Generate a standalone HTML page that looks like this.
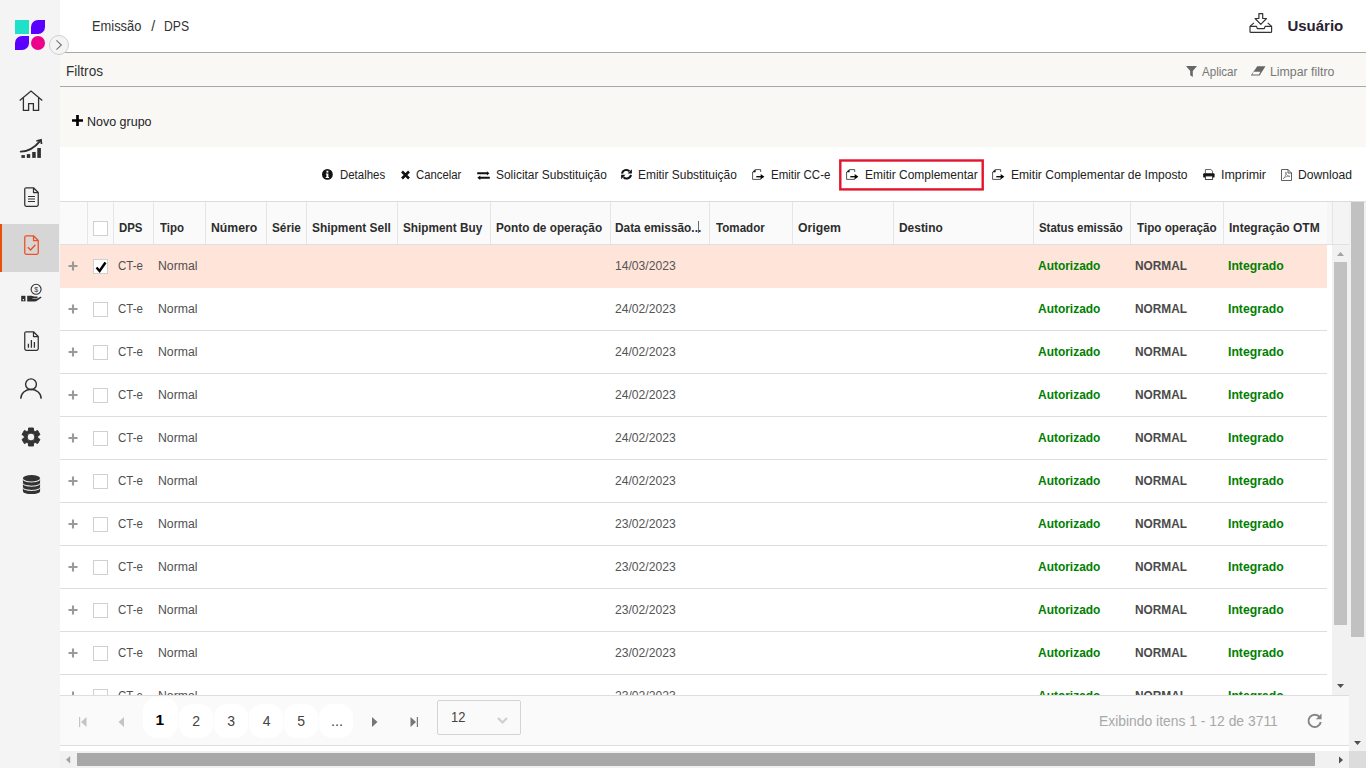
<!DOCTYPE html>
<html lang="pt-BR"><head><meta charset="utf-8"><title>Emissão / DPS</title>
<style>
*{box-sizing:border-box;margin:0;padding:0}
html,body{width:1366px;height:768px;overflow:hidden;background:#fff}
body{position:relative;font-family:"Liberation Sans",sans-serif;color:#333}
.t{position:absolute;white-space:nowrap;line-height:20px;height:20px;transform-origin:0 50%}
.b{position:absolute}
svg{position:absolute;overflow:visible}
</style></head><body>

<div class="b" style="left:0;top:0;width:60px;height:768px;background:#f4f4f4"></div>
<div class="b" style="left:60px;top:52px;width:1306px;height:1px;background:#a6a9ab"></div>
<div class="b" style="left:60px;top:53px;width:1306px;height:94px;background:#f9f8f5"></div>
<div class="b" style="left:60px;top:86px;width:1306px;height:1px;background:#a6a9ab"></div>
<svg style="left:15px;top:20px" width="30" height="30" viewBox="0 0 30 30">
<rect x="0" y="0" width="14" height="14" fill="#1fe0c8"/>
<path d="M16 14 V7 A7 7 0 0 1 23 0 H30 V7 A7 7 0 0 1 23 14 Z" fill="#5a00ff"/>
<path d="M0 30 V23 A7 7 0 0 1 7 16 H14 V23 A7 7 0 0 1 7 30 Z" fill="#5a00ff"/>
<circle cx="23" cy="23" r="7" fill="#ec008c"/>
</svg>
<div class="b" style="left:49px;top:35px;width:20px;height:20px;border-radius:50%;background:#f4f4f4;border:1px solid #cfcfcf"></div>
<svg style="left:49px;top:35px" width="20" height="20" viewBox="0 0 20 20"><path d="M7.4 5.4 L12.4 10 L7.4 14.6" fill="none" stroke="#707070" stroke-width="1.05"/></svg>
<div class="b" style="left:0;top:224px;width:59px;height:48px;background:#d6d6d6"></div>
<div class="b" style="left:0;top:224px;width:2px;height:48px;background:#e8500a"></div>
<svg style="left:19.4px;top:90px" width="24" height="22" viewBox="0 0 24 22"><path d="M0.7 10.6 L12 1 L23.3 10.6 M4.4 8 V20.3 H9.6 V13.6 H14.4 V20.3 H19.6 V8" fill="none" stroke="#303034" stroke-width="1.3" stroke-linejoin="miter"/></svg>
<svg style="left:20px;top:139px" width="23" height="20" viewBox="0 0 23 20">
<path d="M0.7 12.6 Q 11.5 12.6 20.2 1.9" fill="none" stroke="#303034" stroke-width="1.9" stroke-linecap="round"/>
<path d="M16.4 2 L21 0.9 L21.5 5" fill="none" stroke="#303034" stroke-width="1.7" stroke-linejoin="miter"/>
<rect x="1.4" y="16.1" width="3.5" height="2.8" fill="#303034"/><rect x="6.8" y="15.1" width="3.4" height="3.8" fill="#303034"/>
<rect x="12.2" y="13" width="3.5" height="5.9" fill="#303034"/><rect x="17.3" y="9" width="3.6" height="9.9" fill="#303034"/>
</svg>
<svg style="left:24px;top:187px" width="15" height="20" viewBox="0 0 15 20"><path d="M2.2 0.75 H9.5 L14.25 5.5 V17.8 A1.45 1.45 0 0 1 12.8 19.25 H2.2 A1.45 1.45 0 0 1 0.75 17.8 V2.2 A1.45 1.45 0 0 1 2.2 0.75 Z M9.5 0.75 V5.5 H14.25" fill="none" stroke="#303034" stroke-width="1.25" stroke-linejoin="round"/><path d="M4 9.5 H11 M4 12 H11 M4 14.5 H11" stroke="#303034" stroke-width="1.2"/></svg>
<svg style="left:24px;top:235px" width="15" height="20" viewBox="0 0 15 20"><path d="M2.2 0.75 H9.5 L14.25 5.5 V17.8 A1.45 1.45 0 0 1 12.8 19.25 H2.2 A1.45 1.45 0 0 1 0.75 17.8 V2.2 A1.45 1.45 0 0 1 2.2 0.75 Z M9.5 0.75 V5.5 H14.25" fill="none" stroke="#f04e23" stroke-width="1.25" stroke-linejoin="round"/><path d="M3.8 12.2 L6.6 15 L11.4 9.8" fill="none" stroke="#f04e23" stroke-width="1.4"/></svg>
<svg style="left:20px;top:283px" width="23" height="20" viewBox="0 0 23 20">
<circle cx="16.1" cy="6.3" r="5" fill="none" stroke="#303034" stroke-width="1.1"/>
<text x="16.1" y="8.9" font-size="7" font-family="Liberation Sans, sans-serif" text-anchor="middle" fill="#303034">$</text>
<rect x="1.2" y="12.8" width="4.3" height="5.5" fill="#303034"/><circle cx="3.4" cy="16.7" r="0.75" fill="#f4f4f4"/>
<path d="M7.2 12.7 H11.6 C13 12.7 13.6 13.5 15 13.5 H17 C18 13.5 18 14.9 17 14.9 H12.4 V15.5 H17.4 L20.3 13.8 C21.3 13.3 21.9 14.4 21 15 L16.6 18 C16.1 18.3 15.6 18.4 15.1 18.4 H7.2 Z" fill="#303034"/>
</svg>
<svg style="left:24px;top:331px" width="15" height="20" viewBox="0 0 15 20"><path d="M2.2 0.75 H9.5 L14.25 5.5 V17.8 A1.45 1.45 0 0 1 12.8 19.25 H2.2 A1.45 1.45 0 0 1 0.75 17.8 V2.2 A1.45 1.45 0 0 1 2.2 0.75 Z M9.5 0.75 V5.5 H14.25" fill="none" stroke="#303034" stroke-width="1.25" stroke-linejoin="round"/><path d="M4.4 16.7 V12.8 M7.4 16.7 V8.9 M10.4 16.7 V10.9" stroke="#303034" stroke-width="1.3"/></svg>
<svg style="left:20px;top:378px" width="22" height="21" viewBox="0 0 22 21"><circle cx="11" cy="6.3" r="5.4" fill="none" stroke="#303034" stroke-width="1.4"/><path d="M0.8 20.8 A10.2 9.5 0 0 1 21.2 20.8" fill="none" stroke="#303034" stroke-width="1.4"/></svg>
<svg style="left:21px;top:427px" width="20" height="20" viewBox="0 0 20 20"><path d="M7.43 3.70 L7.59 1.02 L12.41 1.02 L12.57 3.70 L14.17 4.63 L16.58 3.42 L18.98 7.59 L16.74 9.08 L16.74 10.92 L18.98 12.41 L16.58 16.58 L14.17 15.37 L12.57 16.30 L12.41 18.98 L7.59 18.98 L7.43 16.30 L5.83 15.37 L3.42 16.58 L1.02 12.41 L3.26 10.92 L3.26 9.08 L1.02 7.59 L3.42 3.42 L5.83 4.63 Z M6.10 10.00 a3.90 3.90 0 1 0 7.80 0 a3.90 3.90 0 1 0 -7.80 0 Z" fill="#333" fill-rule="evenodd" stroke="#333" stroke-width="1" stroke-linejoin="round"/></svg>
<svg style="left:22px;top:474px" width="19" height="21" viewBox="0 0 19 21">
<ellipse cx="9.5" cy="4.3" rx="8.6" ry="3.2" fill="#333"/>
<path d="M0.9 5.35 C0.9 9.55 18.1 9.55 18.1 5.35 V8.55 C18.1 12.75 0.9 12.75 0.9 8.55 Z" fill="#333"/>
<path d="M0.9 9.55 C0.9 13.75 18.1 13.75 18.1 9.55 V12.75 C18.1 16.95 0.9 16.95 0.9 12.75 Z" fill="#333"/>
<path d="M0.9 13.75 C0.9 17.95 18.1 17.95 18.1 13.75 V16.95 C18.1 21.15 0.9 21.15 0.9 16.95 Z" fill="#333"/>
</svg>
<span id="t0" class="t" style="left:92.48px;top:16px;font-size:14px;font-weight:400;color:#333;transform:scaleX(0.9192);">Emissão</span>
<span id="t1" class="t" style="left:151.30px;top:16px;font-size:14px;font-weight:400;color:#333;transform:scaleX(1.0000);">/</span>
<span id="t2" class="t" style="left:163.93px;top:16px;font-size:14px;font-weight:400;color:#333;transform:scaleX(0.8704);">DPS</span>
<span id="t3" class="t" style="left:1287.40px;top:15.5px;font-size:15px;font-weight:700;color:#2a2230;transform:scaleX(1.0000);">Usuário</span>
<svg style="left:1249px;top:13px" width="24" height="21" viewBox="0 0 24 21">
<path d="M9.9 0.7 H13.7 V5.5 H17.5 L11.8 11.4 L6.1 5.5 H9.9 Z" fill="none" stroke="#333" stroke-width="1.2" stroke-linejoin="round"/>
<path d="M4.9 9.9 L1 13.4 V18.4 A1 1 0 0 0 2 19.4 H21.6 A1 1 0 0 0 22.6 18.4 V13.4 L18.7 9.9" fill="none" stroke="#333" stroke-width="1.2" stroke-linejoin="round"/>
<path d="M1 13.4 H7.5 L8.3 15.6 H15.3 L16.1 13.4 H22.6" fill="none" stroke="#333" stroke-width="1.2" stroke-linejoin="round"/>
</svg>
<span id="t4" class="t" style="left:65.53px;top:61px;font-size:14px;font-weight:400;color:#333;transform:scaleX(0.9703);">Filtros</span>
<svg style="left:1186px;top:66px" width="11" height="11" viewBox="0 0 11 11"><path d="M0 0 H11 L6.8 5 V11 L4.2 9.2 V5 Z" fill="#666"/></svg>
<span id="t5" class="t" style="left:1201.80px;top:62px;font-size:12.5px;font-weight:400;color:#777;transform:scaleX(0.9263);">Aplicar</span>
<svg style="left:1250px;top:66px" width="16" height="10" viewBox="0 0 16 10"><path d="M7.3 0.2 H15.5 L9.6 9.6 H0.8 Z" fill="#666"/><path d="M3.6 5.8 H10.4 L8.9 8.5 H2.4 Z" fill="#fbfaf8"/></svg>
<span id="t6" class="t" style="left:1270.11px;top:62px;font-size:12.5px;font-weight:400;color:#777;transform:scaleX(0.9859);">Limpar filtro</span>
<svg style="left:72px;top:115px" width="11" height="11" viewBox="0 0 11 11"><path d="M5.5 0 V11 M0 5.5 H11" stroke="#000" stroke-width="2.7"/></svg>
<span id="t7" class="t" style="left:87.40px;top:112px;font-size:12.5px;font-weight:400;color:#222;transform:scaleX(0.9984);">Novo grupo</span>
<svg style="left:322.2px;top:169.2px" width="10.8" height="10.8" viewBox="0 0 10 10"><circle cx="5" cy="5" r="5" fill="#111"/><rect x="4.1" y="1.6" width="1.8" height="1.7" fill="#fff"/><path d="M3.6 4.2 H5.9 V7.3 H6.6 V8.3 H3.4 V7.3 H4.1 V5.2 H3.6 Z" fill="#fff"/></svg>
<span id="t8" class="t" style="left:339.89px;top:165px;font-size:12.5px;font-weight:400;color:#222;transform:scaleX(0.9146);">Detalhes</span>
<svg style="left:400.5px;top:171px" width="9" height="8" viewBox="0 0 9 8"><path d="M1 0.5 L8 7.5 M8 0.5 L1 7.5" stroke="#111" stroke-width="2.6"/></svg>
<span id="t9" class="t" style="left:416.39px;top:165px;font-size:12.5px;font-weight:400;color:#222;transform:scaleX(0.9061);">Cancelar</span>
<svg style="left:477px;top:170.5px" width="13" height="9" viewBox="0 0 13 9"><path d="M0.2 1.3 H9.9 V0.2 L12.4 2.3 L9.9 4.4 V3.3 H0.2 Z M12.8 5.7 H3.3 V4.5 L0.3 6.7 L3.3 8.9 V7.7 H12.8 Z" fill="#111"/></svg>
<span id="t10" class="t" style="left:495.84px;top:165px;font-size:12.5px;font-weight:400;color:#222;transform:scaleX(0.9553);">Solicitar Substituição</span>
<svg style="left:621.2px;top:169.4px" width="11" height="10.4" viewBox="0 0 11 10">
<path d="M1.1 4.4 A4.3 4 0 0 1 8.5 2" fill="none" stroke="#111" stroke-width="2"/>
<path d="M10.9 0 V4.4 H6.5 Z" fill="#111"/>
<path d="M9.9 5.6 A4.3 4 0 0 1 2.5 8" fill="none" stroke="#111" stroke-width="2"/>
<path d="M0.1 10 V5.6 H4.5 Z" fill="#111"/></svg>
<span id="t11" class="t" style="left:638.35px;top:165px;font-size:12.5px;font-weight:400;color:#222;transform:scaleX(0.9549);">Emitir Substituição</span>
<svg style="left:751.8px;top:169px" width="13" height="11" viewBox="0 0 13 11"><path d="M8.7 3 V0.6 H3.4 L0.6 3 V10.4 H8.7 V9.4" fill="none" stroke="#4a4a4a" stroke-width="0.95"/><path d="M0.4 3.2 L3.6 0.4 V3.2 Z" fill="#111"/><path d="M4.3 7.7 H9.2" stroke="#111" stroke-width="1.4"/><path d="M8.7 5.1 L12.4 7.7 L8.7 10.3 Z" fill="#000"/></svg>
<span id="t12" class="t" style="left:771.38px;top:165px;font-size:12.5px;font-weight:400;color:#222;transform:scaleX(0.9190);">Emitir CC-e</span>
<svg style="left:839px;top:159px" width="146" height="33" viewBox="0 0 146 33"><rect x="1.3" y="1.5" width="142.4" height="28.9" fill="none" stroke="#e3142b" stroke-width="2.4"/></svg>
<svg style="left:845.6px;top:169px" width="13" height="11" viewBox="0 0 13 11"><path d="M8.7 3 V0.6 H3.4 L0.6 3 V10.4 H8.7 V9.4" fill="none" stroke="#4a4a4a" stroke-width="0.95"/><path d="M0.4 3.2 L3.6 0.4 V3.2 Z" fill="#111"/><path d="M4.3 7.7 H9.2" stroke="#111" stroke-width="1.4"/><path d="M8.7 5.1 L12.4 7.7 L8.7 10.3 Z" fill="#000"/></svg>
<span id="t13" class="t" style="left:864.84px;top:165px;font-size:12.5px;font-weight:400;color:#222;transform:scaleX(0.9603);">Emitir Complementar</span>
<svg style="left:992.2px;top:169px" width="13" height="11" viewBox="0 0 13 11"><path d="M8.7 3 V0.6 H3.4 L0.6 3 V10.4 H8.7 V9.4" fill="none" stroke="#4a4a4a" stroke-width="0.95"/><path d="M0.4 3.2 L3.6 0.4 V3.2 Z" fill="#111"/><path d="M4.3 7.7 H9.2" stroke="#111" stroke-width="1.4"/><path d="M8.7 5.1 L12.4 7.7 L8.7 10.3 Z" fill="#000"/></svg>
<span id="t14" class="t" style="left:1011.33px;top:165px;font-size:12.5px;font-weight:400;color:#222;transform:scaleX(0.9663);">Emitir Complementar de Imposto</span>
<svg style="left:1202.6px;top:169px" width="12" height="11" viewBox="0 0 12 11">
<path d="M2.4 4.5 V0.5 H7.8 L9.5 2.1 V4.5" fill="#fff" stroke="#555" stroke-width="0.9"/>
<rect x="0.2" y="4.3" width="11.4" height="4.3" rx="0.9" fill="#111"/>
<rect x="2.4" y="7" width="7.2" height="3.5" fill="#fff" stroke="#333" stroke-width="0.9"/></svg>
<span id="t15" class="t" style="left:1220.80px;top:165px;font-size:12.5px;font-weight:400;color:#222;transform:scaleX(0.9977);">Imprimir</span>
<svg style="left:1281px;top:169px" width="11" height="12" viewBox="0 0 11 12">
<path d="M0.5 0.5 H7 L10.5 4 V11.5 H0.5 Z M7 0.5 V4 H10.5" fill="none" stroke="#444" stroke-width="0.85"/>
<path d="M2.3 9.6 C3.8 8.6 5 6 5.2 3.6 C5.3 2.6 4.4 2.8 4.6 3.8 C5 5.8 7 7.6 8.8 7.6 C9.4 7 8 6.8 6.8 7.2 C5.2 7.6 3.2 8.6 2.3 9.6 Z" fill="none" stroke="#555" stroke-width="0.6"/></svg>
<span id="t16" class="t" style="left:1298.33px;top:165px;font-size:12.5px;font-weight:400;color:#222;transform:scaleX(0.9704);">Download</span>
<div class="b" style="left:60px;top:201px;width:1306px;height:1px;background:#dcdcdc"></div>
<div class="b" style="left:60px;top:202px;width:1267px;height:42px;background:#fafafa"></div>
<div class="b" style="left:1327px;top:202px;width:6px;height:42px;background:#f6f6f6"></div>
<div class="b" style="left:1332px;top:202px;width:1px;height:42px;background:#e4e4e4"></div>
<div class="b" style="left:1333px;top:202px;width:16px;height:42px;background:#f4f4f4"></div>
<div class="b" style="left:60px;top:244px;width:1289px;height:1px;background:#e0e0e0"></div>
<div class="b" style="left:87px;top:202px;width:1px;height:42px;background:#e6e6e6"></div>
<div class="b" style="left:113px;top:202px;width:1px;height:42px;background:#e6e6e6"></div>
<div class="b" style="left:153px;top:202px;width:1px;height:42px;background:#e6e6e6"></div>
<div class="b" style="left:205px;top:202px;width:1px;height:42px;background:#e6e6e6"></div>
<div class="b" style="left:266px;top:202px;width:1px;height:42px;background:#e6e6e6"></div>
<div class="b" style="left:306px;top:202px;width:1px;height:42px;background:#e6e6e6"></div>
<div class="b" style="left:397px;top:202px;width:1px;height:42px;background:#e6e6e6"></div>
<div class="b" style="left:490px;top:202px;width:1px;height:42px;background:#e6e6e6"></div>
<div class="b" style="left:610px;top:202px;width:1px;height:42px;background:#e6e6e6"></div>
<div class="b" style="left:709px;top:202px;width:1px;height:42px;background:#e6e6e6"></div>
<div class="b" style="left:792px;top:202px;width:1px;height:42px;background:#e6e6e6"></div>
<div class="b" style="left:893px;top:202px;width:1px;height:42px;background:#e6e6e6"></div>
<div class="b" style="left:1033px;top:202px;width:1px;height:42px;background:#e6e6e6"></div>
<div class="b" style="left:1130px;top:202px;width:1px;height:42px;background:#e6e6e6"></div>
<div class="b" style="left:1223px;top:202px;width:1px;height:42px;background:#e6e6e6"></div>
<div class="b" style="left:93px;top:221px;width:15px;height:15px;background:#fff;border:1px solid #d0d0d0"></div>
<span id="t17" class="t" style="left:118.89px;top:217.5px;font-size:12.5px;font-weight:700;color:#2d2d2d;transform:scaleX(0.9125);">DPS</span>
<span id="t18" class="t" style="left:159.80px;top:217.5px;font-size:12.5px;font-weight:700;color:#2d2d2d;transform:scaleX(0.9192);">Tipo</span>
<span id="t19" class="t" style="left:211.12px;top:217.5px;font-size:12.5px;font-weight:700;color:#2d2d2d;transform:scaleX(0.9804);">Número</span>
<span id="t20" class="t" style="left:271.66px;top:217.5px;font-size:12.5px;font-weight:700;color:#2d2d2d;transform:scaleX(0.9414);">Série</span>
<span id="t21" class="t" style="left:311.85px;top:217.5px;font-size:12.5px;font-weight:700;color:#2d2d2d;transform:scaleX(0.9531);">Shipment Sell</span>
<span id="t22" class="t" style="left:402.86px;top:217.5px;font-size:12.5px;font-weight:700;color:#2d2d2d;transform:scaleX(0.9422);">Shipment Buy</span>
<span id="t23" class="t" style="left:496.06px;top:217.5px;font-size:12.5px;font-weight:700;color:#2d2d2d;transform:scaleX(0.9432);">Ponto de operação</span>
<span id="t24" class="t" style="left:615.25px;top:217.5px;font-size:12.5px;font-weight:700;color:#2d2d2d;transform:scaleX(0.9472);">Data emissão...</span>
<span id="t25" class="t" style="left:716.20px;top:217.5px;font-size:12.5px;font-weight:700;color:#2d2d2d;transform:scaleX(0.9283);">Tomador</span>
<span id="t26" class="t" style="left:798.12px;top:217.5px;font-size:12.5px;font-weight:700;color:#2d2d2d;transform:scaleX(0.9786);">Origem</span>
<span id="t27" class="t" style="left:899.25px;top:217.5px;font-size:12.5px;font-weight:700;color:#2d2d2d;transform:scaleX(0.9545);">Destino</span>
<span id="t28" class="t" style="left:1038.89px;top:217.5px;font-size:12.5px;font-weight:700;color:#2d2d2d;transform:scaleX(0.9133);">Status emissão</span>
<span id="t29" class="t" style="left:1137.10px;top:217.5px;font-size:12.5px;font-weight:700;color:#2d2d2d;transform:scaleX(0.9353);">Tipo operação</span>
<span id="t30" class="t" style="left:1229.14px;top:217.5px;font-size:12.5px;font-weight:700;color:#2d2d2d;transform:scaleX(0.9602);">Integração OTM</span>
<div class="b" style="left:698px;top:221px;width:1px;height:12px;background:#6a6a6a"></div>
<div class="b" style="left:60px;top:245px;width:1267px;height:43px;background:#ffe4d9"></div>
<svg style="left:68px;top:261px" width="10" height="10" viewBox="0 0 10 10"><path d="M5 0.5 V9.5 M0.5 5 H9.5" stroke="#9a9a9a" stroke-width="2.1"/></svg>
<div class="b" style="left:93px;top:259px;width:15px;height:15px;background:#fff;border:1px solid #d0d0d0"></div>
<svg style="left:95px;top:261px" width="12" height="12" viewBox="0 0 12 12"><path d="M1.5 6.5 L4.6 10 L10.5 1.5" fill="none" stroke="#000" stroke-width="2.4"/></svg>
<span id="t31" class="t" style="left:117.88px;top:256px;font-size:12.5px;font-weight:400;color:#505050;transform:scaleX(0.9192);">CT-e</span>
<span id="t32" class="t" style="left:158.22px;top:256px;font-size:12.5px;font-weight:400;color:#505050;transform:scaleX(0.9795);">Normal</span>
<span id="t33" class="t" style="left:615.03px;top:256px;font-size:12.5px;font-weight:400;color:#555;transform:scaleX(0.9705);">14/03/2023</span>
<span id="t34" class="t" style="left:1038.24px;top:256px;font-size:12.5px;font-weight:700;color:#008000;transform:scaleX(0.9562);">Autorizado</span>
<span id="t35" class="t" style="left:1135.35px;top:256px;font-size:12.5px;font-weight:700;color:#4a4a4a;transform:scaleX(0.9481);">NORMAL</span>
<span id="t36" class="t" style="left:1227.72px;top:256px;font-size:12.5px;font-weight:700;color:#008000;transform:scaleX(0.9782);">Integrado</span>
<div class="b" style="left:60px;top:330px;width:1267px;height:1px;background:#dedede"></div>
<svg style="left:68px;top:304px" width="10" height="10" viewBox="0 0 10 10"><path d="M5 0.5 V9.5 M0.5 5 H9.5" stroke="#9a9a9a" stroke-width="2.1"/></svg>
<div class="b" style="left:93px;top:302px;width:15px;height:15px;background:#fff;border:1px solid #d0d0d0"></div>
<span id="t37" class="t" style="left:117.88px;top:299px;font-size:12.5px;font-weight:400;color:#505050;transform:scaleX(0.9192);">CT-e</span>
<span id="t38" class="t" style="left:158.22px;top:299px;font-size:12.5px;font-weight:400;color:#505050;transform:scaleX(0.9795);">Normal</span>
<span id="t39" class="t" style="left:615.03px;top:299px;font-size:12.5px;font-weight:400;color:#555;transform:scaleX(0.9705);">24/02/2023</span>
<span id="t40" class="t" style="left:1038.24px;top:299px;font-size:12.5px;font-weight:700;color:#008000;transform:scaleX(0.9562);">Autorizado</span>
<span id="t41" class="t" style="left:1135.35px;top:299px;font-size:12.5px;font-weight:700;color:#4a4a4a;transform:scaleX(0.9481);">NORMAL</span>
<span id="t42" class="t" style="left:1227.72px;top:299px;font-size:12.5px;font-weight:700;color:#008000;transform:scaleX(0.9782);">Integrado</span>
<div class="b" style="left:60px;top:373px;width:1267px;height:1px;background:#dedede"></div>
<svg style="left:68px;top:347px" width="10" height="10" viewBox="0 0 10 10"><path d="M5 0.5 V9.5 M0.5 5 H9.5" stroke="#9a9a9a" stroke-width="2.1"/></svg>
<div class="b" style="left:93px;top:345px;width:15px;height:15px;background:#fff;border:1px solid #d0d0d0"></div>
<span id="t43" class="t" style="left:117.88px;top:342px;font-size:12.5px;font-weight:400;color:#505050;transform:scaleX(0.9192);">CT-e</span>
<span id="t44" class="t" style="left:158.22px;top:342px;font-size:12.5px;font-weight:400;color:#505050;transform:scaleX(0.9795);">Normal</span>
<span id="t45" class="t" style="left:615.03px;top:342px;font-size:12.5px;font-weight:400;color:#555;transform:scaleX(0.9705);">24/02/2023</span>
<span id="t46" class="t" style="left:1038.24px;top:342px;font-size:12.5px;font-weight:700;color:#008000;transform:scaleX(0.9562);">Autorizado</span>
<span id="t47" class="t" style="left:1135.35px;top:342px;font-size:12.5px;font-weight:700;color:#4a4a4a;transform:scaleX(0.9481);">NORMAL</span>
<span id="t48" class="t" style="left:1227.72px;top:342px;font-size:12.5px;font-weight:700;color:#008000;transform:scaleX(0.9782);">Integrado</span>
<div class="b" style="left:60px;top:416px;width:1267px;height:1px;background:#dedede"></div>
<svg style="left:68px;top:390px" width="10" height="10" viewBox="0 0 10 10"><path d="M5 0.5 V9.5 M0.5 5 H9.5" stroke="#9a9a9a" stroke-width="2.1"/></svg>
<div class="b" style="left:93px;top:388px;width:15px;height:15px;background:#fff;border:1px solid #d0d0d0"></div>
<span id="t49" class="t" style="left:117.88px;top:385px;font-size:12.5px;font-weight:400;color:#505050;transform:scaleX(0.9192);">CT-e</span>
<span id="t50" class="t" style="left:158.22px;top:385px;font-size:12.5px;font-weight:400;color:#505050;transform:scaleX(0.9795);">Normal</span>
<span id="t51" class="t" style="left:615.03px;top:385px;font-size:12.5px;font-weight:400;color:#555;transform:scaleX(0.9705);">24/02/2023</span>
<span id="t52" class="t" style="left:1038.24px;top:385px;font-size:12.5px;font-weight:700;color:#008000;transform:scaleX(0.9562);">Autorizado</span>
<span id="t53" class="t" style="left:1135.35px;top:385px;font-size:12.5px;font-weight:700;color:#4a4a4a;transform:scaleX(0.9481);">NORMAL</span>
<span id="t54" class="t" style="left:1227.72px;top:385px;font-size:12.5px;font-weight:700;color:#008000;transform:scaleX(0.9782);">Integrado</span>
<div class="b" style="left:60px;top:459px;width:1267px;height:1px;background:#dedede"></div>
<svg style="left:68px;top:433px" width="10" height="10" viewBox="0 0 10 10"><path d="M5 0.5 V9.5 M0.5 5 H9.5" stroke="#9a9a9a" stroke-width="2.1"/></svg>
<div class="b" style="left:93px;top:431px;width:15px;height:15px;background:#fff;border:1px solid #d0d0d0"></div>
<span id="t55" class="t" style="left:117.88px;top:428px;font-size:12.5px;font-weight:400;color:#505050;transform:scaleX(0.9192);">CT-e</span>
<span id="t56" class="t" style="left:158.22px;top:428px;font-size:12.5px;font-weight:400;color:#505050;transform:scaleX(0.9795);">Normal</span>
<span id="t57" class="t" style="left:615.03px;top:428px;font-size:12.5px;font-weight:400;color:#555;transform:scaleX(0.9705);">24/02/2023</span>
<span id="t58" class="t" style="left:1038.24px;top:428px;font-size:12.5px;font-weight:700;color:#008000;transform:scaleX(0.9562);">Autorizado</span>
<span id="t59" class="t" style="left:1135.35px;top:428px;font-size:12.5px;font-weight:700;color:#4a4a4a;transform:scaleX(0.9481);">NORMAL</span>
<span id="t60" class="t" style="left:1227.72px;top:428px;font-size:12.5px;font-weight:700;color:#008000;transform:scaleX(0.9782);">Integrado</span>
<div class="b" style="left:60px;top:502px;width:1267px;height:1px;background:#dedede"></div>
<svg style="left:68px;top:476px" width="10" height="10" viewBox="0 0 10 10"><path d="M5 0.5 V9.5 M0.5 5 H9.5" stroke="#9a9a9a" stroke-width="2.1"/></svg>
<div class="b" style="left:93px;top:474px;width:15px;height:15px;background:#fff;border:1px solid #d0d0d0"></div>
<span id="t61" class="t" style="left:117.88px;top:471px;font-size:12.5px;font-weight:400;color:#505050;transform:scaleX(0.9192);">CT-e</span>
<span id="t62" class="t" style="left:158.22px;top:471px;font-size:12.5px;font-weight:400;color:#505050;transform:scaleX(0.9795);">Normal</span>
<span id="t63" class="t" style="left:615.03px;top:471px;font-size:12.5px;font-weight:400;color:#555;transform:scaleX(0.9705);">24/02/2023</span>
<span id="t64" class="t" style="left:1038.24px;top:471px;font-size:12.5px;font-weight:700;color:#008000;transform:scaleX(0.9562);">Autorizado</span>
<span id="t65" class="t" style="left:1135.35px;top:471px;font-size:12.5px;font-weight:700;color:#4a4a4a;transform:scaleX(0.9481);">NORMAL</span>
<span id="t66" class="t" style="left:1227.72px;top:471px;font-size:12.5px;font-weight:700;color:#008000;transform:scaleX(0.9782);">Integrado</span>
<div class="b" style="left:60px;top:545px;width:1267px;height:1px;background:#dedede"></div>
<svg style="left:68px;top:519px" width="10" height="10" viewBox="0 0 10 10"><path d="M5 0.5 V9.5 M0.5 5 H9.5" stroke="#9a9a9a" stroke-width="2.1"/></svg>
<div class="b" style="left:93px;top:517px;width:15px;height:15px;background:#fff;border:1px solid #d0d0d0"></div>
<span id="t67" class="t" style="left:117.88px;top:514px;font-size:12.5px;font-weight:400;color:#505050;transform:scaleX(0.9192);">CT-e</span>
<span id="t68" class="t" style="left:158.22px;top:514px;font-size:12.5px;font-weight:400;color:#505050;transform:scaleX(0.9795);">Normal</span>
<span id="t69" class="t" style="left:615.03px;top:514px;font-size:12.5px;font-weight:400;color:#555;transform:scaleX(0.9705);">23/02/2023</span>
<span id="t70" class="t" style="left:1038.24px;top:514px;font-size:12.5px;font-weight:700;color:#008000;transform:scaleX(0.9562);">Autorizado</span>
<span id="t71" class="t" style="left:1135.35px;top:514px;font-size:12.5px;font-weight:700;color:#4a4a4a;transform:scaleX(0.9481);">NORMAL</span>
<span id="t72" class="t" style="left:1227.72px;top:514px;font-size:12.5px;font-weight:700;color:#008000;transform:scaleX(0.9782);">Integrado</span>
<div class="b" style="left:60px;top:588px;width:1267px;height:1px;background:#dedede"></div>
<svg style="left:68px;top:562px" width="10" height="10" viewBox="0 0 10 10"><path d="M5 0.5 V9.5 M0.5 5 H9.5" stroke="#9a9a9a" stroke-width="2.1"/></svg>
<div class="b" style="left:93px;top:560px;width:15px;height:15px;background:#fff;border:1px solid #d0d0d0"></div>
<span id="t73" class="t" style="left:117.88px;top:557px;font-size:12.5px;font-weight:400;color:#505050;transform:scaleX(0.9192);">CT-e</span>
<span id="t74" class="t" style="left:158.22px;top:557px;font-size:12.5px;font-weight:400;color:#505050;transform:scaleX(0.9795);">Normal</span>
<span id="t75" class="t" style="left:615.03px;top:557px;font-size:12.5px;font-weight:400;color:#555;transform:scaleX(0.9705);">23/02/2023</span>
<span id="t76" class="t" style="left:1038.24px;top:557px;font-size:12.5px;font-weight:700;color:#008000;transform:scaleX(0.9562);">Autorizado</span>
<span id="t77" class="t" style="left:1135.35px;top:557px;font-size:12.5px;font-weight:700;color:#4a4a4a;transform:scaleX(0.9481);">NORMAL</span>
<span id="t78" class="t" style="left:1227.72px;top:557px;font-size:12.5px;font-weight:700;color:#008000;transform:scaleX(0.9782);">Integrado</span>
<div class="b" style="left:60px;top:631px;width:1267px;height:1px;background:#dedede"></div>
<svg style="left:68px;top:605px" width="10" height="10" viewBox="0 0 10 10"><path d="M5 0.5 V9.5 M0.5 5 H9.5" stroke="#9a9a9a" stroke-width="2.1"/></svg>
<div class="b" style="left:93px;top:603px;width:15px;height:15px;background:#fff;border:1px solid #d0d0d0"></div>
<span id="t79" class="t" style="left:117.88px;top:600px;font-size:12.5px;font-weight:400;color:#505050;transform:scaleX(0.9192);">CT-e</span>
<span id="t80" class="t" style="left:158.22px;top:600px;font-size:12.5px;font-weight:400;color:#505050;transform:scaleX(0.9795);">Normal</span>
<span id="t81" class="t" style="left:615.03px;top:600px;font-size:12.5px;font-weight:400;color:#555;transform:scaleX(0.9705);">23/02/2023</span>
<span id="t82" class="t" style="left:1038.24px;top:600px;font-size:12.5px;font-weight:700;color:#008000;transform:scaleX(0.9562);">Autorizado</span>
<span id="t83" class="t" style="left:1135.35px;top:600px;font-size:12.5px;font-weight:700;color:#4a4a4a;transform:scaleX(0.9481);">NORMAL</span>
<span id="t84" class="t" style="left:1227.72px;top:600px;font-size:12.5px;font-weight:700;color:#008000;transform:scaleX(0.9782);">Integrado</span>
<div class="b" style="left:60px;top:674px;width:1267px;height:1px;background:#dedede"></div>
<svg style="left:68px;top:648px" width="10" height="10" viewBox="0 0 10 10"><path d="M5 0.5 V9.5 M0.5 5 H9.5" stroke="#9a9a9a" stroke-width="2.1"/></svg>
<div class="b" style="left:93px;top:646px;width:15px;height:15px;background:#fff;border:1px solid #d0d0d0"></div>
<span id="t85" class="t" style="left:117.88px;top:643px;font-size:12.5px;font-weight:400;color:#505050;transform:scaleX(0.9192);">CT-e</span>
<span id="t86" class="t" style="left:158.22px;top:643px;font-size:12.5px;font-weight:400;color:#505050;transform:scaleX(0.9795);">Normal</span>
<span id="t87" class="t" style="left:615.03px;top:643px;font-size:12.5px;font-weight:400;color:#555;transform:scaleX(0.9705);">23/02/2023</span>
<span id="t88" class="t" style="left:1038.24px;top:643px;font-size:12.5px;font-weight:700;color:#008000;transform:scaleX(0.9562);">Autorizado</span>
<span id="t89" class="t" style="left:1135.35px;top:643px;font-size:12.5px;font-weight:700;color:#4a4a4a;transform:scaleX(0.9481);">NORMAL</span>
<span id="t90" class="t" style="left:1227.72px;top:643px;font-size:12.5px;font-weight:700;color:#008000;transform:scaleX(0.9782);">Integrado</span>
<svg style="left:68px;top:691px" width="10" height="10" viewBox="0 0 10 10"><path d="M5 0.5 V9.5 M0.5 5 H9.5" stroke="#9a9a9a" stroke-width="2.1"/></svg>
<div class="b" style="left:93px;top:689px;width:15px;height:15px;background:#fff;border:1px solid #d0d0d0"></div>
<span id="t91" class="t" style="left:117.88px;top:686px;font-size:12.5px;font-weight:400;color:#505050;transform:scaleX(0.9192);">CT-e</span>
<span id="t92" class="t" style="left:158.22px;top:686px;font-size:12.5px;font-weight:400;color:#505050;transform:scaleX(0.9795);">Normal</span>
<span id="t93" class="t" style="left:615.03px;top:686px;font-size:12.5px;font-weight:400;color:#555;transform:scaleX(0.9705);">23/02/2023</span>
<span id="t94" class="t" style="left:1038.24px;top:686px;font-size:12.5px;font-weight:700;color:#008000;transform:scaleX(0.9562);">Autorizado</span>
<span id="t95" class="t" style="left:1135.35px;top:686px;font-size:12.5px;font-weight:700;color:#4a4a4a;transform:scaleX(0.9481);">NORMAL</span>
<span id="t96" class="t" style="left:1227.72px;top:686px;font-size:12.5px;font-weight:700;color:#008000;transform:scaleX(0.9782);">Integrado</span>
<div class="b" style="left:1332px;top:245px;width:17px;height:451px;background:#f1f1f1"></div>
<div class="b" style="left:1334px;top:262px;width:13px;height:363px;background:#c1c1c1"></div>
<svg style="left:1337px;top:252px" width="7" height="4" viewBox="0 0 9 5"><path d="M0 5 L4.5 0 L9 5 Z" fill="#a3a3a3"/></svg>
<svg style="left:1337px;top:684px" width="7" height="4" viewBox="0 0 9 5"><path d="M0 0 L4.5 5 L9 0 Z" fill="#505050"/></svg>
<div class="b" style="left:1349px;top:202px;width:17px;height:549px;background:#f1f1f1"></div>
<div class="b" style="left:1351px;top:202px;width:13px;height:435px;background:#c1c1c1"></div>
<svg style="left:1354px;top:740.5px" width="7" height="4" viewBox="0 0 9 5"><path d="M0 0 L4.5 5 L9 0 Z" fill="#505050"/></svg>
<div class="b" style="left:1349px;top:751px;width:17px;height:17px;background:#dcdcdc"></div>
<div class="b" style="left:60px;top:695px;width:1289px;height:51px;background:#fafafa;border-top:1px solid #dedede;border-bottom:1px solid #dedede"></div>
<div class="b" style="left:60px;top:746px;width:1289px;height:5px;background:#fff"></div>
<div class="b" style="left:143px;top:697px;width:35px;height:41px;background:#fff;border-radius:14px"></div>
<div class="b" style="left:178.5px;top:704px;width:34px;height:34px;background:#fff;border-radius:13px"></div>
<div class="b" style="left:213.5px;top:704px;width:34px;height:34px;background:#fff;border-radius:13px"></div>
<div class="b" style="left:248.5px;top:704px;width:34px;height:34px;background:#fff;border-radius:13px"></div>
<div class="b" style="left:283.5px;top:704px;width:34px;height:34px;background:#fff;border-radius:13px"></div>
<div class="b" style="left:318.5px;top:704px;width:34px;height:34px;background:#fff;border-radius:13px"></div>
<span id="t97" class="t" style="left:155.50px;top:710.4px;font-size:15.5px;font-weight:700;color:#000;transform:scaleX(1.0000);">1</span>
<span id="t98" class="t" style="left:192.30px;top:710.5px;font-size:14px;font-weight:400;color:#444;transform:scaleX(1.0000);">2</span>
<span id="t99" class="t" style="left:227.30px;top:710.5px;font-size:14px;font-weight:400;color:#444;transform:scaleX(1.0000);">3</span>
<span id="t100" class="t" style="left:262.80px;top:710.5px;font-size:14px;font-weight:400;color:#444;transform:scaleX(1.0000);">4</span>
<span id="t101" class="t" style="left:297.30px;top:710.5px;font-size:14px;font-weight:400;color:#444;transform:scaleX(1.0000);">5</span>
<span id="t102" class="t" style="left:330.76px;top:710.5px;font-size:14px;font-weight:400;color:#444;transform:scaleX(1.0444);">...</span>
<svg style="left:79px;top:717px" width="8" height="10" viewBox="0 0 8 10"><path d="M0.6 0 V10" stroke="#c4c4c4" stroke-width="1.2"/><path d="M7.5 0 V10 L2 5 Z" fill="#c4c4c4"/></svg>
<svg style="left:117.5px;top:717px" width="6" height="10" viewBox="0 0 6 10"><path d="M6 0 V10 L0.5 5 Z" fill="#c4c4c4"/></svg>
<svg style="left:371.5px;top:717px" width="6" height="10" viewBox="0 0 6 10"><path d="M0 0 V10 L5.5 5 Z" fill="#777"/></svg>
<svg style="left:409.5px;top:717px" width="8" height="10" viewBox="0 0 8 10"><path d="M7.4 0 V10" stroke="#777" stroke-width="1.2"/><path d="M0.5 0 V10 L6 5 Z" fill="#777"/></svg>
<div class="b" style="left:437px;top:700px;width:84px;height:35px;border:1px solid #d4d4d4;border-radius:2px;background:#fafafa"></div>
<span id="t103" class="t" style="left:451.38px;top:707px;font-size:14px;font-weight:400;color:#444;transform:scaleX(0.9214);">12</span>
<svg style="left:497px;top:717px" width="11" height="7" viewBox="0 0 11 7"><path d="M1 1 L5.5 5.5 L10 1" fill="none" stroke="#cfcfcf" stroke-width="2.2"/></svg>
<span id="t104" class="t" style="left:1099.01px;top:710.5px;font-size:14px;font-weight:400;color:#a8a8a8;transform:scaleX(0.9916);">Exibindo itens 1 - 12 de 3711</span>
<svg style="left:1307.4px;top:713.4px" width="15.4" height="15.4" viewBox="0 0 15 15">
<path d="M12.4 4.2 A6 6 0 1 0 13.4 8.8" fill="none" stroke="#858585" stroke-width="1.9"/>
<path d="M14.2 0.6 V6.2 H8.6 Z" fill="#858585"/></svg>
<div class="b" style="left:60px;top:751px;width:1289px;height:17px;background:#f1f1f1"></div>
<div class="b" style="left:77px;top:753px;width:1238px;height:13px;background:#a8a8a8"></div>
<svg style="left:65.8px;top:755.5px" width="4.2" height="7.6" viewBox="0 0 5 9"><path d="M5 0 V9 L0 4.5 Z" fill="#a3a3a3"/></svg>
<svg style="left:1339px;top:755.5px" width="4" height="8" viewBox="0 0 5 9"><path d="M0 0 V9 L5 4.5 Z" fill="#505050"/></svg>
</body></html>
